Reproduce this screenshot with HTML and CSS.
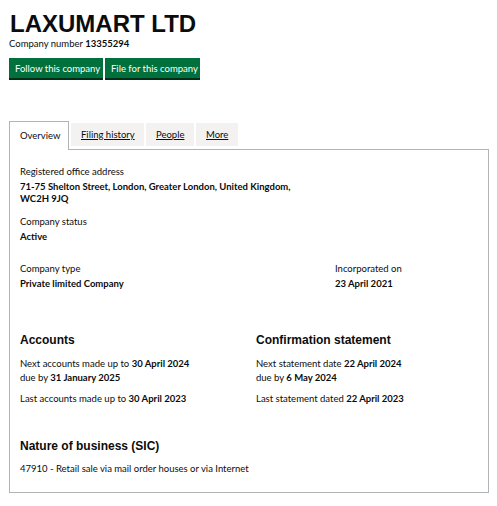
FILE: index.html
```html
<!DOCTYPE html>
<html lang="en">
<head>
<meta charset="utf-8">
<link rel="stylesheet" href="styles.css">
</head>
<body>
<main class="page">
  <h1 class="title">LAXUMART LTD</h1>
  <p class="company-number">Company number <strong>13355294</strong></p>
  <div class="actions">
    <a class="button" href="#">Follow this company</a>
    <a class="button" href="#">File for this company</a>
  </div>

  <ul class="tabs">
    <li class="tab tab-selected"><span>Overview</span></li>
    <li class="tab"><a href="#">Filing history</a></li>
    <li class="tab"><a href="#">People</a></li>
    <li class="tab"><a href="#">More</a></li>
  </ul>

  <section class="panel">
    <dl class="field field-address">
      <dt>Registered office address</dt>
      <dd>71-75 Shelton Street, London, Greater London, United Kingdom,<br>WC2H 9JQ</dd>
    </dl>
    <dl class="field field-status">
      <dt>Company status</dt>
      <dd>Active</dd>
    </dl>
    <div class="row-type">
      <dl class="field">
        <dt>Company type</dt>
        <dd>Private limited Company</dd>
      </dl>
      <dl class="field">
        <dt>Incorporated on</dt>
        <dd>23 April 2021</dd>
      </dl>
    </div>

    <div class="row-cols">
      <div class="col">
        <h2 class="heading">Accounts</h2>
        <p class="line">Next accounts made up to <strong>30 April 2024</strong><br>due by <strong>31 January 2025</strong></p>
        <p class="line">Last accounts made up to <strong>30 April 2023</strong></p>
      </div>
      <div class="col">
        <h2 class="heading">Confirmation statement</h2>
        <p class="line">Next statement date <strong>22 April 2024</strong><br>due by <strong>6 May 2024</strong></p>
        <p class="line">Last statement dated <strong>22 April 2023</strong></p>
      </div>
    </div>

    <h2 class="heading heading-lg">Nature of business (SIC)</h2>
    <p class="sic">47910 - Retail sale via mail order houses or via Internet</p>
  </section>
</main>
</body>
</html>
```
FILE: styles.css
```css
* { box-sizing: border-box; }
html, body { margin: 0; padding: 0; background: #fff; }
body {
  font-family: Lato, "Liberation Sans", sans-serif;
  color: #0b0c0c;
  font-size: 9.5px;
  line-height: 12px;
}
.page { padding: 10px 8px 0 9px; width: 497px; }
.title {
  font-family: "Liberation Sans", Arial, sans-serif;
  font-weight: 700;
  font-size: 24px;
  line-height: 27px;
  margin: 0 0 0 1px;
}
.company-number { margin: 0; line-height: 13px; color: #0b0c0c; }
.company-number strong { font-weight: 700; }
.actions { display: flex; gap: 2px; margin-top: 8px; }
.button {
  display: block;
  background: #00703c;
  color: #fff;
  text-decoration: none;
  padding: 5px 0 4px 6px;
  line-height: 12px;
  box-shadow: 0 2px 0 #002d18;
  height: 20px;
  white-space: nowrap;
}
.actions .button:first-child { width: 94px; }
.actions .button:last-child { width: 95px; }

.tabs {
  list-style: none;
  display: flex;
  margin: 43px 0 0 0;
  padding: 0;
  align-items: flex-start;
  gap: 2px;
}
.tab {
  background: #f3f2f1;
  margin-top: 2px;
  height: 23px;
  padding: 0 10px;
  display: flex;
  align-items: center;
  white-space: nowrap;
  flex: none;
}
.tab a { color: #0b0c0c; text-decoration: underline; }
.tab-selected {
  background: #fff;
  margin-top: 0;
  height: 29px;
  margin-bottom: -1px;
  border: 1px solid #b1b4b6;
  border-bottom: 0;
  padding: 0 10px;
  position: relative;
  z-index: 1;
}
.tab:nth-child(1) { width: 60px; }
.tab:nth-child(2) { width: 73px; }
.tab:nth-child(3) { width: 48px; }
.tab:nth-child(4) { width: 42px; }

.panel {
  border: 1px solid #b1b4b6;
  width: 480px;
  padding: 16px 10px 17px 10px;
}
.field { margin: 0; }
.field-address { margin-bottom: 11px; }
.field-status { margin-bottom: 20px; }
.field dt { color: #0b0c0c; margin: 0 0 3px 0; }
.field dd { margin: 0; font-weight: 700; }
.row-type { display: grid; grid-template-columns: 315px 1fr; }
.row-cols { display: grid; grid-template-columns: 236px 1fr; margin-top: 42px; }
.heading {
  font-family: "Liberation Sans", Arial, sans-serif;
  font-weight: 700;
  font-size: 12px;
  line-height: 16px;
  margin: 0 0 9px 0;
}
.line { margin: 0 0 7px 0; line-height: 14px; }
.line strong { font-weight: 700; }
.heading-lg { font-size: 12px; margin-top: 25px; margin-bottom: 9px; }
.sic { margin: 0; }
```
